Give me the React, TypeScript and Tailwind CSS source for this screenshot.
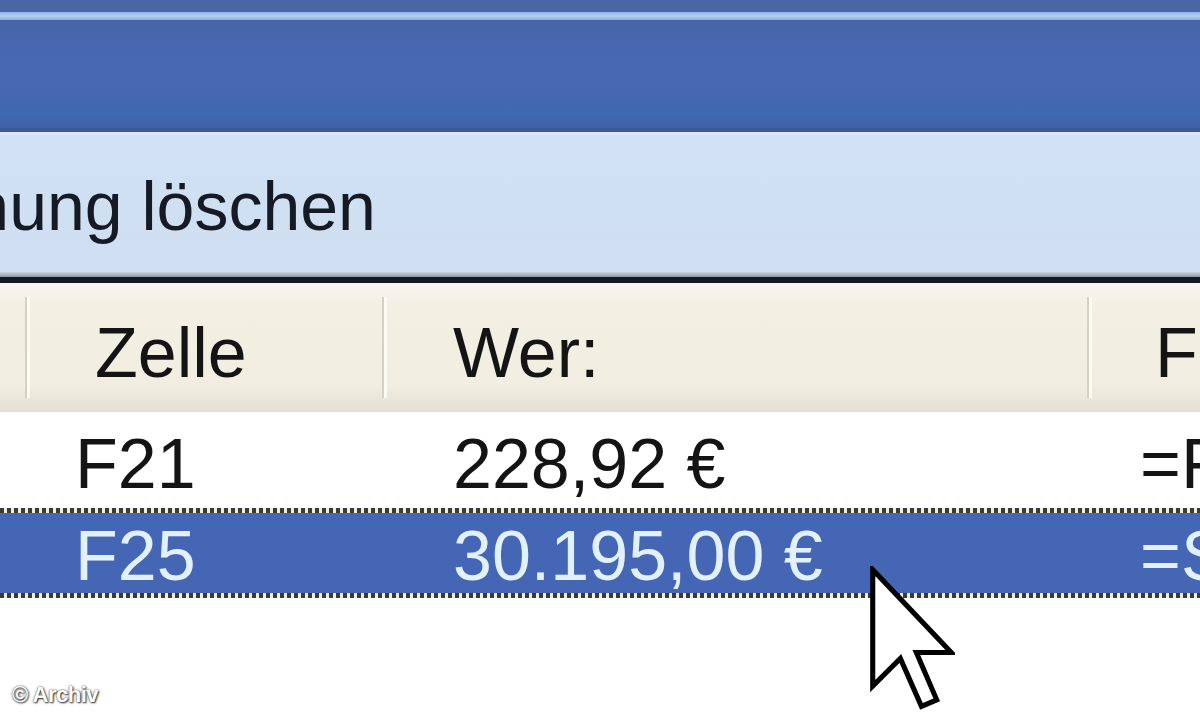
import React from "react";

const font = { fontFamily: '"Liberation Sans", Arial, sans-serif' };

function Dots() {
  return <div className="h-[5px] bg-[repeating-linear-gradient(90deg,#3a3a3a_0_4px,#eeeedd_4px_7px)]" />;
}

function HeaderCell({ w, pl, label, sep = true }: { w: string; pl: string; label?: string; sep?: boolean }) {
  return (
    <div className={`relative flex h-full shrink-0 ${w}`}>
      <div className={`flex-1 overflow-hidden whitespace-nowrap pt-[35px] ${pl}`}>{label}</div>
      {sep && (
        <div className="flex h-full items-stretch py-[14px]">
          <div className="w-[2px] bg-[#d6d2c2]" />
          <div className="w-[3px] bg-[#fbfaf4]" />
        </div>
      )}
    </div>
  );
}

function Row({ cell, value, formula, selected }: { cell: string; value: string; formula: string; selected?: boolean }) {
  const pt = selected ? "pt-[8px]" : "pt-[17px]";
  return (
    <div className={`flex h-full whitespace-nowrap ${selected ? "text-[#e2f1ff]" : "text-[#141414]"}`}>
      <div className="w-[30px] shrink-0" />
      <div className={`w-[357px] shrink-0 pl-[45px] ${pt}`}>{cell}</div>
      <div className={`w-[705px] shrink-0 pl-[66px] ${pt}`}>{value}</div>
      <div className={`flex-1 overflow-hidden pl-[48px] ${pt}`}>{formula}</div>
    </div>
  );
}

export default function App() {
  return (
    <div className="relative h-[720px] w-[1200px] overflow-hidden bg-white text-[70px] leading-none" style={font}>
      {/* window title bar */}
      <div className="h-[12px] bg-[#4a66a4]" />
      <div className="h-[8px] bg-[linear-gradient(#8eb0e6,#b2cff5,#8eaee2)]" />
      <div className="h-[108px] bg-[linear-gradient(#4865a8,#4767b2_30%,#4668b1_65%,#3d69b0_88%,#4262a6)]" />
      <div className="h-[4px] bg-[#3d5894]" />

      {/* toolbar */}
      <div className="h-[140px] overflow-hidden border-t-[3px] border-[#d9e5fb] bg-[linear-gradient(#d3e1f6,#cee0f2_50%,#d1dff1)] pt-[37px] text-[68px] text-[#151a24]">
        <div className="ml-[-297px] whitespace-nowrap">Überwachung löschen</div>
      </div>
      <div className="h-[5px] bg-[linear-gradient(#c8d4e0,#8a96a4)]" />
      <div className="h-[6px] bg-[#141a24]" />

      {/* column headers */}
      <div className="flex h-[129px] bg-[linear-gradient(#f6f5ef,#f2efe3_20%,#f1eee1_80%,#e4e1d3)] text-[#141414]">
        <HeaderCell w="w-[30px]" pl="pl-0" />
        <HeaderCell w="w-[357px]" pl="pl-[65px]" label="Zelle" />
        <HeaderCell w="w-[705px]" pl="pl-[66px]" label="Wer:" />
        <HeaderCell w="flex-1" pl="pl-[63px]" label="Formel" sep={false} />
      </div>

      {/* rows */}
      <div className="h-[96px] bg-white">
        <Row cell="F21" value="228,92 €" formula="=Formel" />
      </div>
      <div className="flex h-[90px] flex-col">
        <Dots />
        <div className="flex-1 bg-[#4466b4]">
          <Row cell="F25" value="30.195,00 €" formula="=Summe" selected />
        </div>
        <Dots />
      </div>

      {/* mouse pointer */}
      <svg className="absolute left-[869px] top-[566px]" width="86" height="144" viewBox="0 0 11.8 19.8">
        <path d="M0.5 0.5 L0.5 16.5 L4.3 12.7 L7.2 19.3 L9.3 18.4 L6.5 11.9 L11.3 11.9 Z" fill="#ffffff" stroke="#000000" strokeWidth="0.7" strokeLinejoin="miter" />
      </svg>

      {/* watermark */}
      <div className="absolute left-[12px] top-[684px] text-[22px] font-bold tracking-[-0.5px] text-white [text-shadow:0_0_2px_#333,1px_1px_2px_#333]">© Archiv</div>
    </div>
  );
}
